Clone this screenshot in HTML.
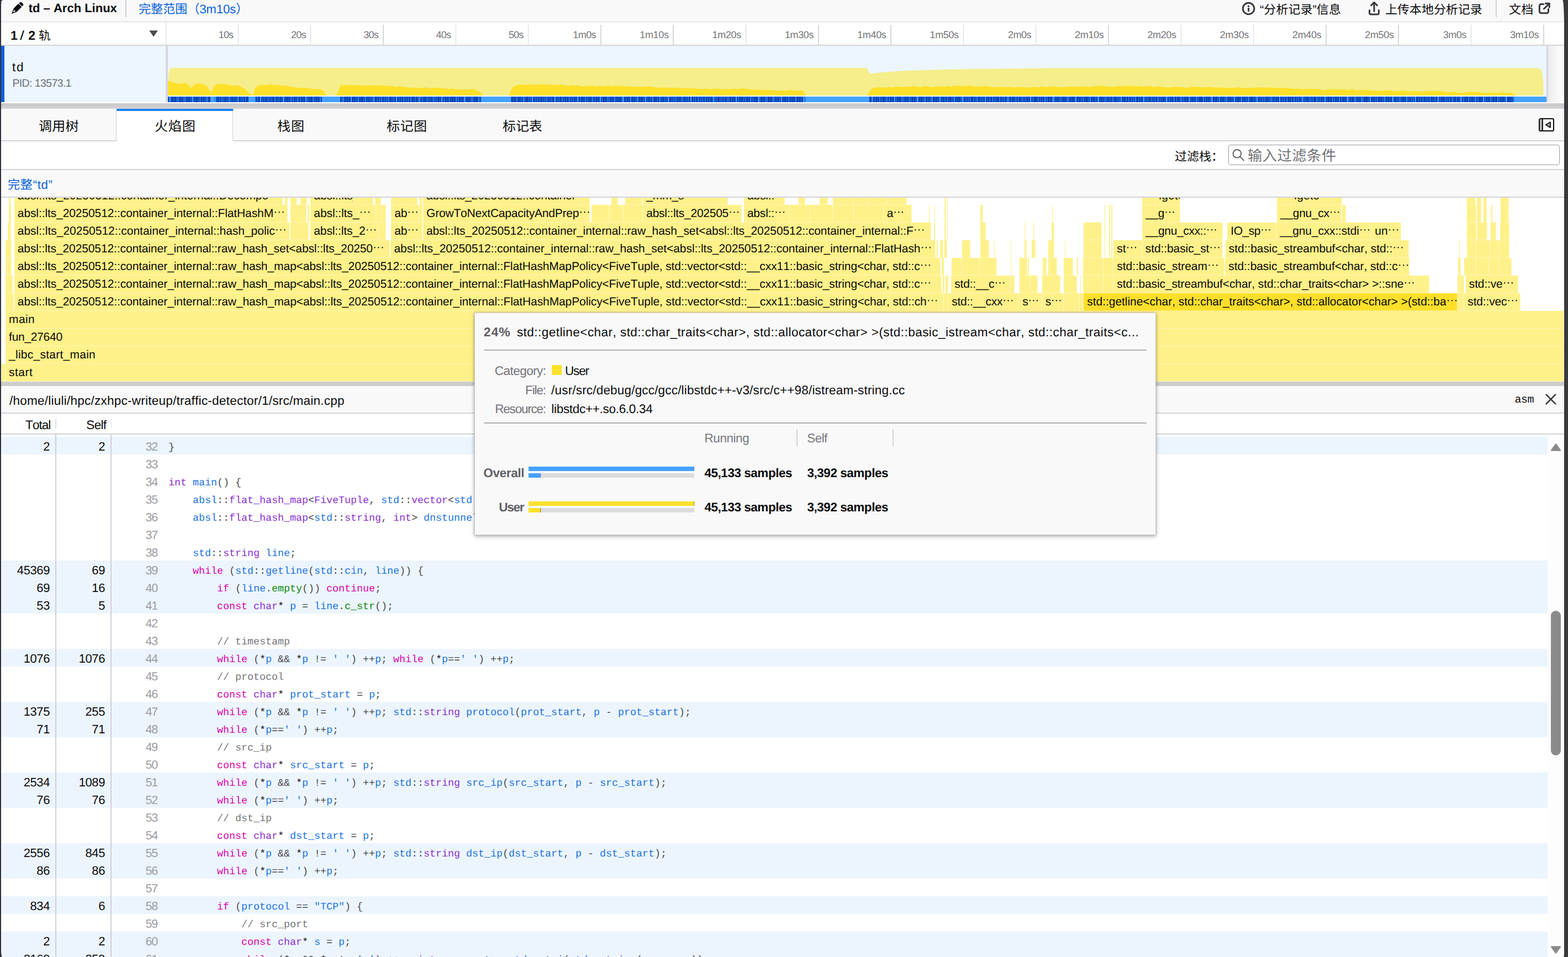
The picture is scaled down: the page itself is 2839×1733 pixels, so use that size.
<!DOCTYPE html>
<html lang="en"><head><meta charset="utf-8"><title>td – Arch Linux – Firefox Profiler</title>
<style>
html,body{margin:0;padding:0;background:#fff}
body{width:2839px;height:1733px;position:relative;overflow:hidden;font-family:"Liberation Sans",sans-serif;font-kerning:none;text-rendering:geometricPrecision}
.a{position:absolute;display:block}
.t{position:absolute;white-space:pre;font-family:"Liberation Sans",sans-serif}
.t.m{font-family:"Liberation Mono",monospace}
.ct{position:absolute;overflow:visible}
.ct svg{display:block;overflow:visible}
.ct svg text{font-family:"Liberation Sans","Noto Sans CJK SC",sans-serif}
.sr{position:absolute;left:0;top:0;width:1px;height:1px;overflow:hidden;opacity:0;font-size:1px;white-space:nowrap}
.fb{position:absolute;height:32px;box-sizing:border-box;background:#fff189;border-bottom:1px solid rgba(255,255,255,.42);border-right:1px solid rgba(255,255,255,.55);
 font-size:21px;line-height:28.4px;padding-top:2px;letter-spacing:-0.09px;padding-left:6.3px;color:#0c0c0d;white-space:pre;overflow:hidden}
.fe{position:absolute;height:32px;box-sizing:border-box;background:#fff189;border-bottom:1px solid rgba(255,255,255,.42);border-right:1px solid rgba(255,255,255,.55)}
.fb.sel{background:#fddf2a}
.fb i{font-style:normal;position:relative;top:-2.2px}
.code{position:absolute;left:305px;height:32px;line-height:32px;font-family:"Liberation Mono",monospace;font-size:18.333px;white-space:pre;color:#4a4a4f}
.kw{color:#dd00a9}.ty{color:#8a2fd0}.id{color:#1a72e0}.fn{color:#0a8a0a}.st{color:#1a72e0}.cm{color:#76767a}.op{color:#4a4a4f}.star{color:#0c0c0d}.nu{color:#058b00}
</style></head>
<body>
<div class="a" style="left:0.00px;top:0.00px;width:2839.00px;height:39.00px;background:#f9f9fa;"></div>
<div class="a" style="left:0.00px;top:38.60px;width:2839.00px;height:1.60px;background:#d4d4d8;"></div>
<svg class="a" style="left:19px;top:4px" width="23" height="23" viewBox="0 0 23 23"><g transform="rotate(45 11.5 11.5)" fill="#0c0c0d"><rect x="7.3" y="-2.6" width="8.4" height="4.6" rx="2"/><rect x="7.3" y="3.1" width="8.4" height="12.4"/><path d="M7.3 15.5 h8.4 l-4.2 9.6 z"/><path d="M9.5 17 h4 l-2 4.4 z" fill="#f9f9fa"/></g></svg>
<div class="t" style="left:51.72px;top:0.88px;font-size:22px;line-height:28px;color:#0c0c0d;font-weight:700;">td – Arch Linux</div>
<div class="a" style="left:227.00px;top:0.00px;width:1.60px;height:30.70px;background:#d0d0d5;"></div>
<div class="ct" style="left:249.21px;top:2.40px;width:202.2px;height:31.1px"><svg width="202.2" height="31.1" fill="#0a62d8"><text x="2" y="22.2" font-size="22.2" textLength="198.2" lengthAdjust="spacing">完整范围（3m10s）</text></svg></div>
<svg class="a" style="left:2247px;top:1.5px" width="27" height="27" viewBox="0 0 27 27"><circle cx="13.6" cy="13.5" r="10.3" fill="none" stroke="#38383d" stroke-width="3"/><circle cx="13.6" cy="9.2" r="1.75" fill="#38383d"/><rect x="12.1" y="12.1" width="3.1" height="7.2" rx="1.4" fill="#38383d"/></svg>
<div class="ct" style="left:2278.84px;top:2.60px;width:150.9px;height:30.8px"><svg width="150.9" height="30.8" fill="#0c0c0d"><text x="2" y="22" font-size="22" textLength="146.9" lengthAdjust="spacing">“分析记录”信息</text></svg></div>
<svg class="a" style="left:2476px;top:1px" width="24" height="28" viewBox="0 0 24 28" fill="none" stroke="#38383d" stroke-width="3" stroke-linecap="round" stroke-linejoin="round"><path d="M3.6 17.5 v5 a2.6 2.6 0 0 0 2.6 2.6 h11.6 a2.6 2.6 0 0 0 2.6 -2.6 v-5"/><path d="M12 19.5 V4"/><path d="M6.6 8.8 L12 3.4 L17.4 8.8"/></svg>
<div class="ct" style="left:2506.08px;top:2.60px;width:179.8px;height:30.8px"><svg width="179.8" height="30.8" fill="#0c0c0d"><text x="2" y="22" font-size="22" textLength="175.8" lengthAdjust="spacing">上传本地分析记录</text></svg></div>
<div class="a" style="left:2708.20px;top:0.00px;width:1.60px;height:30.50px;background:#d0d0d5;"></div>
<div class="ct" style="left:2730.00px;top:2.60px;width:48.3px;height:30.8px"><svg width="48.3" height="30.8" fill="#0c0c0d"><text x="2" y="22" font-size="22" textLength="44.3" lengthAdjust="spacing">文档</text></svg></div>
<svg class="a" style="left:2784px;top:3px" width="25" height="25" viewBox="0 0 25 25" fill="none" stroke="#38383d" stroke-width="3" stroke-linecap="round" stroke-linejoin="round"><path d="M10.5 4.6 H6.3 a3 3 0 0 0 -3 3 v10.2 a3 3 0 0 0 3 3 h10.2 a3 3 0 0 0 3 -3 V13.6"/><path d="M14.2 3.2 h7 v7"/><path d="M21 3.4 L11.4 13"/></svg>
<div class="a" style="left:0.00px;top:40.20px;width:2839.00px;height:41.30px;background:#ffffff;"></div>
<div class="a" style="left:0.00px;top:81.30px;width:2839.00px;height:1.70px;background:#d4d4d8;"></div>
<div class="t" style="left:18.98px;top:49.63px;font-size:23px;line-height:29px;color:#0c0c0d;font-weight:700;">1</div>
<div class="t" style="left:35.88px;top:49.63px;font-size:23px;line-height:29px;color:#0c0c0d;transform:scaleX(1.25);transform-origin:0 0;">/</div>
<div class="t" style="left:51.28px;top:49.63px;font-size:23px;line-height:29px;color:#0c0c0d;font-weight:700;">2</div>
<div class="ct" style="left:67.74px;top:49.50px;width:25.5px;height:30.1px"><svg width="25.5" height="30.1" fill="#0c0c0d"><text x="2" y="21.5" font-size="21.5">轨</text></svg></div>
<svg class="a" style="left:269px;top:54px" width="18" height="14" viewBox="0 0 18 14"><path d="M1.2 1.2 H16.8 L9 12.6 Z" fill="#4a4a4f"/></svg>
<div class="a" style="left:299.60px;top:40.20px;width:1.60px;height:42.00px;background:#d7d7db;"></div>
<div class="a" style="left:430.60px;top:45.00px;width:1.60px;height:36.50px;background:#d7d7db;"></div>
<div class="t" style="left:395.68px;top:51.86px;font-size:18px;line-height:22px;color:#75757a;letter-spacing:-0.796px;">10s</div>
<div class="a" style="left:561.90px;top:45.00px;width:1.60px;height:36.50px;background:#d7d7db;"></div>
<div class="t" style="left:526.98px;top:51.86px;font-size:18px;line-height:22px;color:#75757a;letter-spacing:-0.796px;">20s</div>
<div class="a" style="left:693.20px;top:45.00px;width:1.60px;height:36.50px;background:#d7d7db;"></div>
<div class="t" style="left:658.28px;top:51.86px;font-size:18px;line-height:22px;color:#75757a;letter-spacing:-0.796px;">30s</div>
<div class="a" style="left:824.50px;top:45.00px;width:1.60px;height:36.50px;background:#d7d7db;"></div>
<div class="t" style="left:789.58px;top:51.86px;font-size:18px;line-height:22px;color:#75757a;letter-spacing:-0.796px;">40s</div>
<div class="a" style="left:955.80px;top:45.00px;width:1.60px;height:36.50px;background:#d7d7db;"></div>
<div class="t" style="left:920.88px;top:51.86px;font-size:18px;line-height:22px;color:#75757a;letter-spacing:-0.796px;">50s</div>
<div class="a" style="left:1087.10px;top:45.00px;width:1.60px;height:36.50px;background:#d7d7db;"></div>
<div class="t" style="left:1037.18px;top:51.86px;font-size:18px;line-height:22px;color:#75757a;letter-spacing:-0.525px;">1m0s</div>
<div class="a" style="left:1218.40px;top:45.00px;width:1.60px;height:36.50px;background:#d7d7db;"></div>
<div class="t" style="left:1158.28px;top:51.86px;font-size:18px;line-height:22px;color:#75757a;letter-spacing:-0.348px;">1m10s</div>
<div class="a" style="left:1349.70px;top:45.00px;width:1.60px;height:36.50px;background:#d7d7db;"></div>
<div class="t" style="left:1289.58px;top:51.86px;font-size:18px;line-height:22px;color:#75757a;letter-spacing:-0.348px;">1m20s</div>
<div class="a" style="left:1481.00px;top:45.00px;width:1.60px;height:36.50px;background:#d7d7db;"></div>
<div class="t" style="left:1420.88px;top:51.86px;font-size:18px;line-height:22px;color:#75757a;letter-spacing:-0.348px;">1m30s</div>
<div class="a" style="left:1612.30px;top:45.00px;width:1.60px;height:36.50px;background:#d7d7db;"></div>
<div class="t" style="left:1552.18px;top:51.86px;font-size:18px;line-height:22px;color:#75757a;letter-spacing:-0.348px;">1m40s</div>
<div class="a" style="left:1743.60px;top:45.00px;width:1.60px;height:36.50px;background:#d7d7db;"></div>
<div class="t" style="left:1683.48px;top:51.86px;font-size:18px;line-height:22px;color:#75757a;letter-spacing:-0.348px;">1m50s</div>
<div class="a" style="left:1874.90px;top:45.00px;width:1.60px;height:36.50px;background:#d7d7db;"></div>
<div class="t" style="left:1824.98px;top:51.86px;font-size:18px;line-height:22px;color:#75757a;letter-spacing:-0.525px;">2m0s</div>
<div class="a" style="left:2006.20px;top:45.00px;width:1.60px;height:36.50px;background:#d7d7db;"></div>
<div class="t" style="left:1946.08px;top:51.86px;font-size:18px;line-height:22px;color:#75757a;letter-spacing:-0.348px;">2m10s</div>
<div class="a" style="left:2137.50px;top:45.00px;width:1.60px;height:36.50px;background:#d7d7db;"></div>
<div class="t" style="left:2077.38px;top:51.86px;font-size:18px;line-height:22px;color:#75757a;letter-spacing:-0.348px;">2m20s</div>
<div class="a" style="left:2268.80px;top:45.00px;width:1.60px;height:36.50px;background:#d7d7db;"></div>
<div class="t" style="left:2208.68px;top:51.86px;font-size:18px;line-height:22px;color:#75757a;letter-spacing:-0.348px;">2m30s</div>
<div class="a" style="left:2400.10px;top:45.00px;width:1.60px;height:36.50px;background:#d7d7db;"></div>
<div class="t" style="left:2339.98px;top:51.86px;font-size:18px;line-height:22px;color:#75757a;letter-spacing:-0.348px;">2m40s</div>
<div class="a" style="left:2531.40px;top:45.00px;width:1.60px;height:36.50px;background:#d7d7db;"></div>
<div class="t" style="left:2471.28px;top:51.86px;font-size:18px;line-height:22px;color:#75757a;letter-spacing:-0.348px;">2m50s</div>
<div class="a" style="left:2662.70px;top:45.00px;width:1.60px;height:36.50px;background:#d7d7db;"></div>
<div class="t" style="left:2612.78px;top:51.86px;font-size:18px;line-height:22px;color:#75757a;letter-spacing:-0.525px;">3m0s</div>
<div class="a" style="left:2794.00px;top:45.00px;width:1.60px;height:36.50px;background:#d7d7db;"></div>
<div class="t" style="left:2733.88px;top:51.86px;font-size:18px;line-height:22px;color:#75757a;letter-spacing:-0.348px;">3m10s</div>
<div class="a" style="left:0.00px;top:83.00px;width:2839.00px;height:102.20px;background:#edf6fe;"></div>
<div class="a" style="left:2.00px;top:83.00px;width:6.00px;height:102.20px;background:#0a5fe0;"></div>
<div class="t" style="left:22.00px;top:108.10px;font-size:22.5px;line-height:28px;color:#0c0c0d;letter-spacing:1.834px;">td</div>
<div class="t" style="left:22.42px;top:139.04px;font-size:19.5px;line-height:24px;color:#6c7079;letter-spacing:-0.608px;">PID: 13573.1</div>
<div class="a" style="left:300.20px;top:83.00px;width:3.60px;height:102.20px;background:#d8d6e0;"></div>
<svg class="a" style="left:304px;top:83px" width="2496" height="102.2"><polygon fill="#f5ee8a" points="0.0,89.8 0.0,64.0 1.5,48.0 4.0,41.5 8.0,39.8 1262.0,39.8 1266.0,41.0 1271.5,50.8 1293.0,48.0 1328.0,45.5 1396.0,43.0 1496.0,41.5 1596.0,40.6 1796.0,40.3 2482.0,40.3 2486.0,43.0 2489.0,54.0 2490.5,67.0 2490.5,89.8"/><polygon fill="#ffe02a" points="0.3,89.7 0.3,63.5 6.5,65.2 13.3,67.6 20.1,68.6 25.2,69.3 30.3,66.9 37.1,70.3 42.3,77.1 47.4,70.3 52.5,68.6 59.3,68.6 66.1,70.3 71.2,73.7 76.4,82.2 78.7,84.6 83.2,73.7 88.3,69.3 93.4,69.0 98.5,69.6 105.3,69.6 112.2,71.3 117.8,72.2 123.5,71.1 129.2,72.7 134.3,75.5 139.4,78.1 146.2,85.0 151.4,89.1 154.8,88.4 158.2,77.1 163.3,71.3 170.1,71.0 176.9,71.3 182.0,69.7 187.2,70.3 192.8,70.9 198.5,70.2 204.2,72.0 209.3,72.5 214.4,72.3 219.5,73.0 224.7,74.7 230.3,75.0 236.0,76.5 241.7,76.1 247.4,75.7 253.1,76.5 258.8,77.8 264.4,78.2 270.1,79.2 275.8,78.1 281.9,81.6 286.0,88.4 289.4,89.7 289.4,89.8 0.3,89.8"/><polygon fill="#ffe02a" points="304.8,89.7 308.2,82.2 313.3,71.0 320.1,70.7 326.9,71.3 332.6,70.5 338.3,71.9 344.0,70.6 349.7,71.9 355.4,71.5 361.0,72.0 366.7,71.0 372.4,72.3 378.1,71.1 383.8,72.3 389.5,71.5 395.1,72.7 400.8,72.0 406.5,73.2 412.2,74.6 417.9,73.1 423.5,73.7 429.2,74.7 434.9,75.3 440.6,76.4 446.3,75.6 452.0,75.4 457.6,77.1 463.3,76.1 469.0,75.1 474.7,77.4 480.4,76.1 486.1,75.9 491.7,76.0 497.4,77.1 503.1,76.9 508.8,78.5 514.5,77.1 520.2,78.5 525.8,78.9 531.5,78.8 537.0,78.7 542.4,79.4 547.9,78.3 553.3,78.5 558.8,79.9 565.6,83.9 570.7,89.1 572.4,89.7 572.4,89.8 304.8,89.8"/><polygon fill="#ffe02a" points="616.8,89.7 620.2,82.2 625.3,73.7 633.8,71.0 639.5,70.4 645.2,69.9 650.8,71.0 656.5,69.4 662.2,70.5 667.9,70.3 673.6,70.1 679.3,69.4 684.9,70.7 690.6,69.6 696.3,70.7 702.0,71.0 707.7,70.0 713.4,70.3 719.0,71.3 724.7,72.5 730.4,70.9 736.1,72.0 741.8,71.4 747.5,72.6 753.1,73.5 758.8,72.7 764.5,72.3 770.2,72.7 775.9,74.0 781.5,71.7 787.2,74.0 792.9,72.6 798.6,72.3 804.3,73.4 810.2,72.0 816.2,72.7 816.0,72.7 821.7,72.4 827.4,73.9 833.0,72.4 838.7,73.6 844.4,73.9 850.1,73.7 855.8,73.7 861.5,74.4 867.1,73.4 872.8,73.7 878.5,74.4 884.2,75.4 889.9,76.0 895.6,75.5 901.2,75.3 906.9,76.1 912.6,75.9 918.3,76.1 924.0,75.7 929.6,77.2 935.3,77.1 941.0,76.1 946.7,77.1 952.4,77.1 958.1,77.4 963.7,78.4 969.4,78.2 975.1,77.3 980.8,79.2 986.5,78.1 992.2,77.3 997.8,78.2 1003.5,79.2 1009.2,77.7 1014.9,78.7 1020.6,78.8 1025.7,77.2 1030.8,78.4 1035.9,78.2 1041.0,77.1 1047.8,78.2 1054.7,78.8 1060.3,80.0 1066.0,78.7 1071.7,79.8 1077.4,79.8 1083.1,79.9 1088.8,79.9 1094.4,79.9 1100.1,81.1 1105.8,81.5 1111.5,80.5 1117.2,81.1 1122.9,80.9 1128.0,79.6 1133.1,81.1 1138.2,80.8 1143.3,81.6 1148.4,80.2 1151.8,83.9 1155.2,89.1 1156.9,89.7 1156.9,89.8 616.8,89.8"/><polygon fill="#ffe02a" points="1266.1,89.7 1269.5,83.9 1274.6,77.1 1280.8,76.1 1287.1,75.1 1293.3,75.4 1299.0,75.7 1304.7,74.1 1310.4,75.2 1316.1,74.6 1321.7,73.7 1327.4,74.7 1332.7,74.7 1337.9,73.4 1343.2,74.3 1348.4,73.3 1353.6,73.3 1358.9,74.1 1364.1,75.0 1369.4,73.1 1374.6,73.3 1379.9,74.3 1385.1,75.0 1390.4,74.0 1395.6,73.7 1400.7,73.3 1405.8,74.7 1411.0,72.2 1416.1,74.2 1421.2,72.7 1426.3,72.2 1431.4,72.0 1436.5,72.4 1441.6,73.6 1446.8,72.7 1451.9,72.1 1457.0,73.3 1462.1,73.7 1467.2,73.2 1472.3,73.8 1477.4,72.8 1482.6,73.0 1487.7,73.6 1492.8,75.0 1497.9,74.7 1503.1,74.5 1508.4,74.3 1513.6,75.0 1518.9,74.6 1524.1,74.2 1529.4,75.5 1534.6,75.3 1539.9,74.1 1545.1,74.9 1550.3,74.8 1555.6,75.7 1560.8,75.3 1566.1,74.7 1571.1,74.1 1576.1,75.9 1581.1,73.6 1586.1,74.3 1591.1,75.1 1596.1,73.5 1601.1,74.3 1606.1,73.1 1611.1,74.7 1616.1,74.9 1621.1,74.3 1626.1,75.0 1631.1,73.5 1636.1,74.4 1641.1,74.1 1646.1,74.0 1651.1,73.7 1656.1,73.7 1660.4,73.5 1665.8,74.2 1671.3,74.3 1676.7,72.9 1682.1,72.8 1687.2,73.2 1692.4,71.7 1697.5,73.4 1702.7,73.4 1707.8,74.3 1713.0,73.9 1718.2,72.6 1723.3,72.9 1728.5,73.7 1733.6,72.0 1738.8,73.2 1743.9,72.5 1749.1,72.4 1754.2,73.5 1759.4,72.4 1764.5,74.3 1769.7,72.8 1774.9,73.1 1780.0,73.6 1785.2,74.9 1790.3,72.9 1795.5,74.0 1800.6,74.3 1805.8,75.3 1810.9,75.2 1816.1,75.4 1821.2,73.9 1826.4,74.6 1831.5,74.4 1836.7,74.4 1841.9,75.8 1847.0,76.1 1852.2,74.0 1857.3,74.2 1862.5,74.4 1867.6,74.5 1872.8,75.2 1877.9,75.6 1883.1,74.8 1888.2,74.2 1893.4,75.4 1898.6,75.7 1903.7,75.3 1908.9,75.8 1914.0,76.8 1919.2,76.1 1924.3,75.7 1929.5,76.0 1934.6,76.1 1939.8,74.5 1944.9,76.7 1950.1,76.4 1955.2,76.6 1960.4,76.4 1965.6,75.4 1970.7,75.7 1975.9,75.6 1981.0,75.0 1986.2,76.5 1991.3,75.2 1996.5,75.4 2001.6,76.0 2006.8,76.0 2011.9,76.7 2017.1,76.1 2022.3,76.2 2027.4,76.7 2032.6,76.8 2037.7,77.6 2042.9,78.2 2048.0,77.0 2053.2,79.3 2058.3,78.7 2063.5,77.6 2068.6,77.9 2073.8,78.2 2078.9,78.4 2084.1,77.8 2089.3,79.8 2094.4,80.2 2099.6,78.9 2104.7,79.1 2109.9,78.1 2115.0,79.3 2120.2,78.3 2125.3,79.1 2130.5,79.0 2135.6,80.5 2140.8,78.9 2146.0,78.6 2151.1,81.2 2156.3,80.2 2161.4,79.3 2166.6,80.4 2171.7,79.2 2176.9,80.6 2182.0,81.8 2187.2,80.7 2192.3,81.7 2197.5,81.4 2202.6,80.3 2207.8,80.7 2213.0,80.2 2218.1,81.9 2223.3,81.3 2228.4,82.0 2233.6,81.0 2238.7,80.8 2243.9,82.4 2249.0,82.9 2254.2,82.6 2259.3,81.8 2264.5,82.7 2269.7,82.9 2274.8,82.8 2280.0,81.6 2285.1,82.5 2290.3,82.2 2295.4,81.5 2300.6,81.6 2305.7,82.4 2310.9,82.4 2316.0,83.7 2321.2,84.5 2326.3,83.3 2331.5,83.6 2336.7,84.8 2341.8,85.0 2347.0,85.0 2352.1,83.5 2357.3,83.2 2362.4,83.3 2367.6,83.3 2372.7,83.4 2377.9,84.6 2383.0,85.4 2388.2,85.3 2393.3,84.5 2398.5,85.0 2403.7,84.7 2409.4,85.5 2415.2,83.6 2421.0,85.1 2426.7,85.7 2432.5,84.7 2439.7,89.0 2443.3,90.1 2443.3,89.8 1266.1,89.8"/></svg>
<div class="a" style="left:304.00px;top:172.80px;width:2496.00px;height:2.20px;background:#eaf8ff;"></div>
<div class="a" style="left:304.00px;top:175.00px;width:2438.00px;height:10.20px;background:repeating-linear-gradient(90deg,rgba(69,161,255,0) 0 3px,rgba(69,161,255,.9) 3px 4.5px,rgba(69,161,255,0) 4.5px 17px,rgba(69,161,255,.7) 17px 18px,rgba(69,161,255,0) 18px 29px,rgba(69,161,255,.5) 29px 30.5px,rgba(69,161,255,0) 30.5px 41px),repeating-linear-gradient(90deg,rgba(0,30,120,0) 0 6px,rgba(0,30,120,.35) 6px 8px,rgba(0,30,120,0) 8px 13px,rgba(0,30,120,.3) 13px 14px,rgba(0,30,120,0) 14px 23px),repeating-linear-gradient(90deg,#0b48b8 0 2px,#1f6fe0 2px 3px,#0c4fc4 3px 6px,#2f7fe8 6px 7px,#0a44b2 7px 10px,#1862d6 10px 11px,#0b49bb 11px 13px),#0a45b5;"></div>
<div class="a" style="left:2742.00px;top:175.00px;width:58.00px;height:10.20px;background:#45a1ff;"></div>
<div class="a" style="left:380.50px;top:175.00px;width:7.00px;height:10.20px;background:#45a1ff;"></div>
<div class="a" style="left:450.00px;top:175.00px;width:12.00px;height:10.20px;background:#45a1ff;"></div>
<div class="a" style="left:582.50px;top:175.00px;width:33.50px;height:10.20px;background:#45a1ff;"></div>
<div class="a" style="left:871.00px;top:175.00px;width:53.50px;height:10.20px;background:#45a1ff;"></div>
<div class="a" style="left:1457.50px;top:175.00px;width:116.00px;height:10.20px;background:#45a1ff;"></div>
<div class="a" style="left:2800.00px;top:83.00px;width:3.20px;height:102.20px;background:#d8d6e0;"></div>
<div class="a" style="left:2803.20px;top:83.00px;width:29.00px;height:102.20px;background:linear-gradient(90deg,#ececee,#fafafa 70%);"></div>
<div class="a" style="left:0.00px;top:185.20px;width:2839.00px;height:1.80px;background:#ffffff;"></div>
<div class="a" style="left:0.00px;top:187.00px;width:2839.00px;height:10.00px;background:linear-gradient(180deg,#c9c9cc 0,#cdcdcf 60%,#d6d6d8 100%);"></div>
<div class="a" style="left:0.00px;top:197.00px;width:2839.00px;height:58.00px;background:#f9f9fa;"></div>
<div class="a" style="left:0.00px;top:254.20px;width:2839.00px;height:1.90px;background:#d6d6d8;"></div>
<div class="a" style="left:210.50px;top:197.00px;width:211.00px;height:59.20px;background:#ffffff;"></div>
<div class="a" style="left:210.50px;top:197.00px;width:211.00px;height:3.80px;background:#1a82f0;"></div>
<div class="a" style="left:209.80px;top:200.80px;width:1.50px;height:54.00px;background:#d4d4d8;"></div>
<div class="a" style="left:420.80px;top:200.80px;width:1.50px;height:54.00px;background:#d4d4d8;"></div>
<div class="ct" style="left:67.76px;top:212.60px;width:76.4px;height:33.6px"><svg width="76.4" height="33.6" fill="#0c0c0d"><text x="2" y="24" font-size="24" textLength="72.4" lengthAdjust="spacing">调用树</text></svg></div>
<div class="ct" style="left:277.55px;top:212.60px;width:77.7px;height:33.6px"><svg width="77.7" height="33.6" fill="#0c0c0d"><text x="2" y="24" font-size="24" textLength="73.7" lengthAdjust="spacing">火焰图</text></svg></div>
<div class="ct" style="left:500.07px;top:212.60px;width:53.1px;height:33.6px"><svg width="53.1" height="33.6" fill="#0c0c0d"><text x="2" y="24" font-size="24" textLength="49.1" lengthAdjust="spacing">栈图</text></svg></div>
<div class="ct" style="left:698.22px;top:212.60px;width:77.0px;height:33.6px"><svg width="77.0" height="33.6" fill="#0c0c0d"><text x="2" y="24" font-size="24" textLength="73" lengthAdjust="spacing">标记图</text></svg></div>
<div class="ct" style="left:908.23px;top:212.60px;width:75.8px;height:33.6px"><svg width="75.8" height="33.6" fill="#0c0c0d"><text x="2" y="24" font-size="24" textLength="71.8" lengthAdjust="spacing">标记表</text></svg></div>
<svg class="a" style="left:2784px;top:212px" width="32" height="28" viewBox="0 0 32 28"><rect x="3.05" y="3.05" width="25.9" height="22" rx="2" fill="#fff" stroke="#0c0c0d" stroke-width="2.1"/><rect x="4.1" y="4.1" width="3.8" height="19.9" fill="#b4b4b6"/><path d="M8.8 3 V25" stroke="#0c0c0d" stroke-width="2.1"/><path d="M22.9 9.2 V18.9 L14.8 14.05 Z" fill="#b4b4b6" stroke="#0c0c0d" stroke-width="1.9" stroke-linejoin="round"/></svg>
<div class="a" style="left:0.00px;top:256.20px;width:2839.00px;height:50.00px;background:#ffffff;"></div>
<div class="a" style="left:0.00px;top:306.00px;width:2839.00px;height:1.60px;background:#d4d4d8;"></div>
<div class="ct" style="left:2125.49px;top:269.30px;width:92.0px;height:30.8px"><svg width="92.0" height="30.8" fill="#0c0c0d"><text x="2" y="22" font-size="22" textLength="88" lengthAdjust="spacing">过滤栈：</text></svg></div>
<div class="a" style="left:2224.00px;top:262.00px;width:599.50px;height:37.40px;background:#ffffff;border:1.4px solid #9a9aa0;border-radius:4px;box-sizing:border-box;"></div>
<svg class="a" style="left:2230px;top:268px" width="26" height="26" viewBox="0 0 26 26" fill="none" stroke="#58585c" stroke-width="1.9" stroke-linecap="round"><circle cx="9.9" cy="10.3" r="7.3"/><path d="M15.4 15.8 L21.8 22.3"/></svg>
<div class="ct" style="left:2256.68px;top:264.70px;width:164.2px;height:36.8px"><svg width="164.2" height="36.8" fill="#737378"><text x="2" y="26.3" font-size="26.3" textLength="160.2" lengthAdjust="spacing">输入过滤条件</text></svg></div>
<div class="a" style="left:0.00px;top:307.60px;width:2839.00px;height:49.00px;background:#f9f9fa;"></div>
<div class="a" style="left:0.00px;top:356.00px;width:2839.00px;height:1.60px;background:#d4d4d8;"></div>
<div class="ct" style="left:12.26px;top:319.80px;width:85.0px;height:31.1px"><svg width="85.0" height="31.1" fill="#0a62d8"><text x="2" y="22.2" font-size="22.2" textLength="81" lengthAdjust="spacing">完整“td”</text></svg></div>
<div class="a" style="left:0;top:357.6px;width:2832px;height:333.0px;overflow:hidden;background:#fff"><div class="fe" style="left:2.6px;top:301.0px;width:7.2px;"></div><div class="fb" style="left:9.8px;top:301.0px;width:2822.2px;letter-spacing:0.451px;">start</div><div class="fb" style="left:9.8px;top:269.0px;width:2822.2px;letter-spacing:0.249px;">_libc_start_main</div><div class="fb" style="left:9.8px;top:237.0px;width:2822.2px;letter-spacing:-0.287px;">fun_27640</div><div class="fb" style="left:9.8px;top:205.0px;width:2822.2px;letter-spacing:0.387px;">main</div><div class="fe" style="left:9.8px;top:173.0px;width:15.4px;"></div><div class="fb" style="left:25.5px;top:173.0px;width:1683.5px;letter-spacing:-0.101px;">absl::lts_20250512::container_internal::raw_hash_map&lt;absl::lts_20250512::container_internal::FlatHashMapPolicy&lt;FiveTuple, std::vector&lt;std::__cxx11::basic_string&lt;char, std::ch<i>···</i></div><div class="fe" style="left:1709.0px;top:173.0px;width:3.5px;border-right:0;"></div><div class="fe" style="left:1712.5px;top:173.0px;width:4.5px;"></div><div class="fb" style="left:1717.0px;top:173.0px;width:128.0px;letter-spacing:-0.263px;">std::__cxx<i>···</i></div><div class="fb" style="left:1845.0px;top:173.0px;width:41.5px;letter-spacing:-0.547px;">s<i>···</i></div><div class="fb" style="left:1886.5px;top:173.0px;width:39.0px;letter-spacing:-0.547px;">s<i>···</i></div><div class="fe" style="left:1925.5px;top:173.0px;width:29.5px;"></div><div class="fe" style="left:1955.0px;top:173.0px;width:7.0px;"></div><div class="fb sel" style="left:1962.0px;top:173.0px;width:677.0px;letter-spacing:-0.046px;">std::getline&lt;char, std::char_traits&lt;char&gt;, std::allocator&lt;char&gt; &gt;(std::ba<i>···</i></div><div class="fe" style="left:2639.0px;top:173.0px;width:12.0px;"></div><div class="fb" style="left:2651.0px;top:173.0px;width:101.5px;letter-spacing:-0.167px;">std::vec<i>···</i></div><div class="fe" style="left:9.8px;top:141.0px;width:13.0px;"></div><div class="fb" style="left:25.5px;top:141.0px;width:1679.5px;letter-spacing:-0.104px;">absl::lts_20250512::container_internal::raw_hash_map&lt;absl::lts_20250512::container_internal::FlatHashMapPolicy&lt;FiveTuple, std::vector&lt;std::__cxx11::basic_string&lt;char, std::c<i>···</i></div><div class="fe" style="left:1707.0px;top:141.0px;width:3.0px;border-right:0;"></div><div class="fe" style="left:1712.0px;top:141.0px;width:4.5px;"></div><div class="fb" style="left:1722.0px;top:141.0px;width:107.0px;letter-spacing:-0.197px;">std::__c<i>···</i></div><div class="fe" style="left:1829.0px;top:141.0px;width:8.0px;"></div><div class="fe" style="left:1846.0px;top:141.0px;width:19.0px;"></div><div class="fe" style="left:1865.0px;top:141.0px;width:14.0px;"></div><div class="fe" style="left:1887.0px;top:141.0px;width:33.0px;"></div><div class="fe" style="left:1926.0px;top:141.0px;width:24.0px;"></div><div class="fe" style="left:1955.5px;top:141.0px;width:1.5px;border-right:0;"></div><div class="fe" style="left:1960.5px;top:141.0px;width:37.0px;"></div><div class="fe" style="left:1997.5px;top:141.0px;width:18.0px;"></div><div class="fb" style="left:2016.0px;top:141.0px;width:544.5px;letter-spacing:-0.112px;">std::basic_streambuf&lt;char, std::char_traits&lt;char&gt; &gt;::sne<i>···</i></div><div class="fe" style="left:2560.5px;top:141.0px;width:27.0px;"></div><div class="fe" style="left:2639.0px;top:141.0px;width:5.0px;"></div><div class="fe" style="left:2644.0px;top:141.0px;width:7.0px;"></div><div class="fb" style="left:2653.5px;top:141.0px;width:95.5px;letter-spacing:-0.145px;">std::ve<i>···</i></div><div class="fe" style="left:9.8px;top:109.0px;width:4.2px;"></div><div class="fe" style="left:14.0px;top:109.0px;width:7.0px;"></div><div class="fb" style="left:25.5px;top:109.0px;width:1677.0px;letter-spacing:-0.104px;">absl::lts_20250512::container_internal::raw_hash_map&lt;absl::lts_20250512::container_internal::FlatHashMapPolicy&lt;FiveTuple, std::vector&lt;std::__cxx11::basic_string&lt;char, std::c<i>···</i></div><div class="fe" style="left:1705.0px;top:109.0px;width:3.5px;border-right:0;"></div><div class="fe" style="left:1722.5px;top:109.0px;width:18.5px;"></div><div class="fe" style="left:1741.0px;top:109.0px;width:33.0px;"></div><div class="fe" style="left:1774.0px;top:109.0px;width:31.0px;"></div><div class="fe" style="left:1829.5px;top:109.0px;width:1.5px;border-right:0;"></div><div class="fe" style="left:1846.0px;top:109.0px;width:14.0px;"></div><div class="fe" style="left:1861.0px;top:109.0px;width:1.5px;border-right:0;"></div><div class="fe" style="left:1887.5px;top:109.0px;width:7.5px;"></div><div class="fe" style="left:1897.5px;top:109.0px;width:16.0px;"></div><div class="fe" style="left:1926.0px;top:109.0px;width:16.5px;"></div><div class="fe" style="left:1950.0px;top:109.0px;width:1.5px;border-right:0;"></div><div class="fe" style="left:1960.5px;top:109.0px;width:37.0px;"></div><div class="fe" style="left:1997.5px;top:109.0px;width:18.0px;"></div><div class="fb" style="left:2016.0px;top:109.0px;width:201.0px;letter-spacing:-0.057px;">std::basic_stream<i>···</i></div><div class="fb" style="left:2218.0px;top:109.0px;width:334.0px;letter-spacing:-0.068px;">std::basic_streambuf&lt;char, std::c<i>···</i></div><div class="fe" style="left:2640.0px;top:109.0px;width:5.0px;"></div><div class="fe" style="left:2650.5px;top:109.0px;width:22.5px;"></div><div class="fe" style="left:2673.0px;top:109.0px;width:22.5px;"></div><div class="fe" style="left:2695.5px;top:109.0px;width:18.5px;"></div><div class="fe" style="left:2714.0px;top:109.0px;width:23.0px;"></div><div class="fe" style="left:10.4px;top:77.0px;width:3.6px;border-right:0;"></div><div class="fe" style="left:14.0px;top:77.0px;width:6.6px;"></div><div class="fb" style="left:25.5px;top:77.0px;width:680.9px;letter-spacing:-0.114px;">absl::lts_20250512::container_internal::raw_hash_set&lt;absl::lts_20250<i>···</i></div><div class="fb" style="left:707.2px;top:77.0px;width:987.0px;letter-spacing:-0.072px;">absl::lts_20250512::container_internal::raw_hash_set&lt;absl::lts_20250512::container_internal::FlatHash<i>···</i></div><div class="fe" style="left:1696.0px;top:77.0px;width:2.0px;border-right:0;"></div><div class="fe" style="left:1702.0px;top:77.0px;width:6.0px;"></div><div class="fe" style="left:1710.0px;top:77.0px;width:5.0px;"></div><div class="fe" style="left:1742.0px;top:77.0px;width:15.0px;"></div><div class="fe" style="left:1774.5px;top:77.0px;width:16.5px;"></div><div class="fe" style="left:1799.5px;top:77.0px;width:1.5px;border-right:0;"></div><div class="fe" style="left:1829.5px;top:77.0px;width:1.5px;border-right:0;"></div><div class="fe" style="left:1854.5px;top:77.0px;width:4.5px;"></div><div class="fe" style="left:1868.0px;top:77.0px;width:7.0px;"></div><div class="fe" style="left:1897.5px;top:77.0px;width:11.5px;"></div><div class="fe" style="left:1927.5px;top:77.0px;width:1.5px;border-right:0;"></div><div class="fe" style="left:1962.0px;top:77.0px;width:33.0px;"></div><div class="fe" style="left:1999.5px;top:77.0px;width:1.5px;border-right:0;"></div><div class="fe" style="left:2008.0px;top:77.0px;width:1.5px;border-right:0;"></div><div class="fe" style="left:2012.0px;top:77.0px;width:1.5px;border-right:0;"></div><div class="fb" style="left:2016.0px;top:77.0px;width:51.5px;letter-spacing:-0.113px;">st<i>···</i></div><div class="fb" style="left:2067.5px;top:77.0px;width:146.0px;letter-spacing:-0.094px;">std::basic_st<i>···</i></div><div class="fb" style="left:2218.5px;top:77.0px;width:332.5px;letter-spacing:-0.058px;">std::basic_streambuf&lt;char, std::<i>···</i></div><div class="fe" style="left:2641.5px;top:77.0px;width:1.5px;border-right:0;"></div><div class="fe" style="left:2655.5px;top:77.0px;width:17.5px;"></div><div class="fe" style="left:2673.0px;top:77.0px;width:25.0px;"></div><div class="fe" style="left:2698.0px;top:77.0px;width:16.0px;"></div><div class="fe" style="left:2714.0px;top:77.0px;width:19.0px;"></div><div class="fe" style="left:14.4px;top:45.0px;width:5.4px;"></div><div class="fb" style="left:25.5px;top:45.0px;width:499.7px;letter-spacing:-0.022px;">absl::lts_20250512::container_internal::hash_polic<i>···</i></div><div class="fe" style="left:526.0px;top:45.0px;width:32.5px;"></div><div class="fb" style="left:562.0px;top:45.0px;width:123.6px;letter-spacing:-0.121px;">absl::lts_2<i>···</i></div><div class="fe" style="left:685.6px;top:45.0px;width:13.0px;"></div><div class="fb" style="left:708.0px;top:45.0px;width:56.8px;letter-spacing:-0.184px;">ab<i>···</i></div><div class="fb" style="left:765.6px;top:45.0px;width:920.4px;letter-spacing:-0.077px;">absl::lts_20250512::container_internal::raw_hash_set&lt;absl::lts_20250512::container_internal::F<i>···</i></div><div class="fe" style="left:1691.0px;top:45.0px;width:1.5px;border-right:0;"></div><div class="fe" style="left:1714.5px;top:45.0px;width:1.5px;border-right:0;"></div><div class="fe" style="left:1710.0px;top:45.0px;width:1.5px;border-right:0;"></div><div class="fe" style="left:1774.5px;top:45.0px;width:10.5px;"></div><div class="fe" style="left:1854.5px;top:45.0px;width:1.5px;border-right:0;"></div><div class="fe" style="left:1870.5px;top:45.0px;width:1.5px;border-right:0;"></div><div class="fe" style="left:1903.5px;top:45.0px;width:5.5px;"></div><div class="fe" style="left:1962.0px;top:45.0px;width:33.0px;"></div><div class="fe" style="left:1999.5px;top:45.0px;width:1.5px;border-right:0;"></div><div class="fe" style="left:2008.0px;top:45.0px;width:1.5px;border-right:0;"></div><div class="fe" style="left:2012.0px;top:45.0px;width:1.5px;border-right:0;"></div><div class="fb" style="left:2068.0px;top:45.0px;width:145.5px;letter-spacing:-0.340px;">__gnu_cxx::<i>···</i></div><div class="fb" style="left:2222.0px;top:45.0px;width:89.0px;letter-spacing:-0.479px;">IO_sp<i>···</i></div><div class="fb" style="left:2311.0px;top:45.0px;width:172.0px;letter-spacing:-0.163px;">__gnu_cxx::stdi<i>···</i></div><div class="fb" style="left:2483.0px;top:45.0px;width:54.0px;letter-spacing:-0.041px;">un<i>···</i></div><div class="fe" style="left:2655.5px;top:45.0px;width:17.5px;"></div><div class="fe" style="left:2674.0px;top:45.0px;width:19.0px;"></div><div class="fe" style="left:2699.0px;top:45.0px;width:10.0px;"></div><div class="fe" style="left:2715.5px;top:45.0px;width:17.5px;"></div><div class="fe" style="left:16.3px;top:13.0px;width:3.5px;border-right:0;"></div><div class="fb" style="left:25.5px;top:13.0px;width:495.1px;letter-spacing:-0.099px;">absl::lts_20250512::container_internal::FlatHashM<i>···</i></div><div class="fe" style="left:525.7px;top:13.0px;width:29.8px;"></div><div class="fe" style="left:557.0px;top:13.0px;width:2.5px;border-right:0;"></div><div class="fb" style="left:562.0px;top:13.0px;width:119.2px;letter-spacing:-0.079px;">absl::lts_<i>···</i></div><div class="fe" style="left:681.2px;top:13.0px;width:8.8px;"></div><div class="fe" style="left:690.0px;top:13.0px;width:8.6px;"></div><div class="fb" style="left:708.0px;top:13.0px;width:50.8px;letter-spacing:-0.184px;">ab<i>···</i></div><div class="fe" style="left:758.8px;top:13.0px;width:5.8px;"></div><div class="fb" style="left:765.8px;top:13.0px;width:302.4px;letter-spacing:-0.207px;">GrowToNextCapacityAndPrep<i>···</i></div><div class="fe" style="left:1070.6px;top:13.0px;width:32.4px;"></div><div class="fe" style="left:1103.0px;top:13.0px;width:26.0px;"></div><div class="fe" style="left:1129.0px;top:13.0px;width:35.0px;"></div><div class="fb" style="left:1164.0px;top:13.0px;width:179.0px;letter-spacing:-0.267px;">absl::lts_202505<i>···</i></div><div class="fb" style="left:1346.6px;top:13.0px;width:83.4px;letter-spacing:-0.203px;">absl::<i>···</i></div><div class="fe" style="left:1430.0px;top:13.0px;width:36.5px;"></div><div class="fe" style="left:1466.5px;top:13.0px;width:41.0px;"></div><div class="fe" style="left:1507.5px;top:13.0px;width:38.0px;"></div><div class="fe" style="left:1545.5px;top:13.0px;width:54.0px;"></div><div class="fb" style="left:1599.5px;top:13.0px;width:51.5px;letter-spacing:-0.376px;">a<i>···</i></div><div class="fe" style="left:1681.5px;top:13.0px;width:1.5px;border-right:0;"></div><div class="fe" style="left:1691.5px;top:13.0px;width:1.5px;border-right:0;"></div><div class="fe" style="left:1714.5px;top:13.0px;width:1.5px;border-right:0;"></div><div class="fe" style="left:1710.0px;top:13.0px;width:1.5px;border-right:0;"></div><div class="fe" style="left:1774.5px;top:13.0px;width:5.0px;"></div><div class="fe" style="left:1904.5px;top:13.0px;width:1.5px;border-right:0;"></div><div class="fe" style="left:1999.5px;top:13.0px;width:1.5px;border-right:0;"></div><div class="fe" style="left:2008.0px;top:13.0px;width:1.5px;border-right:0;"></div><div class="fe" style="left:2012.0px;top:13.0px;width:1.5px;border-right:0;"></div><div class="fb" style="left:2068.0px;top:13.0px;width:69.0px;letter-spacing:-0.446px;">__g<i>···</i></div><div class="fb" style="left:2311.8px;top:13.0px;width:117.7px;letter-spacing:-0.318px;">__gnu_cx<i>···</i></div><div class="fe" style="left:2429.5px;top:13.0px;width:7.3px;"></div><div class="fe" style="left:2655.5px;top:13.0px;width:17.5px;"></div><div class="fe" style="left:2674.0px;top:13.0px;width:7.5px;"></div><div class="fe" style="left:2685.5px;top:13.0px;width:6.0px;"></div><div class="fe" style="left:2700.0px;top:13.0px;width:1.5px;border-right:0;"></div><div class="fe" style="left:2716.8px;top:13.0px;width:15.0px;"></div><div class="fe" style="left:16.3px;top:-19.0px;width:2.5px;border-right:0;"></div><div class="fb" style="left:25.5px;top:-19.0px;width:486.5px;letter-spacing:-0.046px;">absl::lts_20250512::container_internal::Decompo<i>···</i></div><div class="fe" style="left:516.0px;top:-19.0px;width:5.0px;"></div><div class="fe" style="left:525.7px;top:-19.0px;width:12.3px;"></div><div class="fe" style="left:544.0px;top:-19.0px;width:12.0px;"></div><div class="fb" style="left:562.0px;top:-19.0px;width:78.0px;letter-spacing:-0.079px;">absl::lts_<i>···</i></div><div class="fe" style="left:640.0px;top:-19.0px;width:36.0px;"></div><div class="fe" style="left:679.0px;top:-19.0px;width:11.0px;"></div><div class="fe" style="left:708.0px;top:-19.0px;width:48.0px;"></div><div class="fe" style="left:760.0px;top:-19.0px;width:4.5px;"></div><div class="fb" style="left:765.8px;top:-19.0px;width:302.7px;letter-spacing:-0.136px;">absl::lts_20250512::container<i>···</i></div><div class="fe" style="left:1107.0px;top:-19.0px;width:12.0px;"></div><div class="fe" style="left:1132.0px;top:-19.0px;width:31.0px;"></div><div class="fb" style="left:1164.0px;top:-19.0px;width:153.6px;letter-spacing:-0.206px;">_mm_s<i>···</i></div><div class="fb" style="left:1346.8px;top:-19.0px;width:74.7px;letter-spacing:-0.203px;">absl::<i>···</i></div><div class="fe" style="left:1446.0px;top:-19.0px;width:12.0px;"></div><div class="fe" style="left:1484.0px;top:-19.0px;width:15.0px;"></div><div class="fe" style="left:1507.5px;top:-19.0px;width:38.0px;"></div><div class="fe" style="left:1545.5px;top:-19.0px;width:27.5px;"></div><div class="fe" style="left:1573.0px;top:-19.0px;width:33.0px;"></div><div class="fe" style="left:1606.0px;top:-19.0px;width:35.5px;"></div><div class="fe" style="left:1710.0px;top:-19.0px;width:1.5px;border-right:0;"></div><div class="fe" style="left:1714.5px;top:-19.0px;width:1.5px;border-right:0;"></div><div class="fe" style="left:2068.0px;top:-19.0px;width:24.0px;"></div><div class="fb" style="left:2092.0px;top:-19.0px;width:45.0px;letter-spacing:0.172px;">igetc</div><div class="fe" style="left:2311.8px;top:-19.0px;width:25.2px;"></div><div class="fb" style="left:2337.0px;top:-19.0px;width:93.0px;letter-spacing:0.172px;">igetc</div><div class="fe" style="left:2655.5px;top:-19.0px;width:16.5px;"></div><div class="fe" style="left:2674.0px;top:-19.0px;width:7.5px;"></div><div class="fe" style="left:2685.5px;top:-19.0px;width:6.0px;"></div><div class="fe" style="left:2716.8px;top:-19.0px;width:15.0px;"></div></div>
<div class="a" style="left:0.00px;top:690.60px;width:2839.00px;height:8.60px;background:linear-gradient(180deg,#d2d2d1 0,#cccdca 25%,#cccdca 100%);"></div>
<div class="a" style="left:0.00px;top:699.20px;width:2839.00px;height:48.00px;background:#f9f9fa;"></div>
<div class="a" style="left:0.00px;top:747.00px;width:2839.00px;height:2.00px;background:#d4d4d8;"></div>
<div class="t" style="left:16.90px;top:711.70px;font-size:22.5px;line-height:28px;color:#0c0c0d;letter-spacing:0.252px;">/home/liuli/hpc/zxhpc-writeup/traffic-detector/1/src/main.cpp</div>
<div class="t m" style="left:2742.60px;top:711.88px;font-size:20px;line-height:25px;color:#0c0c0d;letter-spacing:-0.608px;">asm</div>
<svg class="a" style="left:2796px;top:711px" width="24" height="24" viewBox="0 0 24 24" fill="none" stroke="#38383d" stroke-width="2.6" stroke-linecap="round"><path d="M3.6 3.6 L20.2 20.4 M20.2 3.6 L3.6 20.4"/></svg>
<div class="a" style="left:0.00px;top:749.00px;width:2839.00px;height:36.40px;background:#ffffff;"></div>
<div class="a" style="left:0.00px;top:785.20px;width:2839.00px;height:1.80px;background:#d4d4d8;"></div>
<div class="t" style="left:46.10px;top:756.10px;font-size:22.5px;line-height:28px;color:#0c0c0d;letter-spacing:-0.958px;">Total</div>
<div class="t" style="left:156.30px;top:756.10px;font-size:22.5px;line-height:28px;color:#0c0c0d;letter-spacing:-0.660px;">Self</div>
<div class="a" style="left:100.20px;top:757.50px;width:1.40px;height:18.50px;background:#e0e0e4;"></div>
<div class="a" style="left:200.60px;top:757.50px;width:1.40px;height:18.50px;background:#e0e0e4;"></div>
<div class="a" style="left:0.00px;top:787.00px;width:2839.00px;height:946.00px;background:#ffffff;"></div>
<div class="a" style="left:2.00px;top:791.00px;width:2799.50px;height:32.00px;background:#ecf5fe;"></div>
<div class="t" style="left:78.23px;top:795.48px;font-size:22px;line-height:28px;color:#0c0c0d;letter-spacing:-0.370px;">2</div>
<div class="t" style="left:178.23px;top:795.48px;font-size:22px;line-height:28px;color:#0c0c0d;letter-spacing:-0.370px;">2</div>
<div class="t" style="left:263.59px;top:796.15px;font-size:21.5px;line-height:27px;color:#9c9ca2;letter-spacing:-1.250px;">32</div>
<div class="code" style="top:795.12px"><span class="op">}</span></div>
<div class="t" style="left:263.59px;top:828.15px;font-size:21.5px;line-height:27px;color:#9c9ca2;letter-spacing:-1.250px;">33</div>
<div class="t" style="left:263.59px;top:860.15px;font-size:21.5px;line-height:27px;color:#9c9ca2;letter-spacing:-1.250px;">34</div>
<div class="code" style="top:859.12px"><span class="ty">int</span> <span class="id">main</span><span class="op">(</span><span class="op">)</span> <span class="op">{</span></div>
<div class="t" style="left:263.59px;top:892.15px;font-size:21.5px;line-height:27px;color:#9c9ca2;letter-spacing:-1.250px;">35</div>
<div class="code" style="top:891.12px">    <span class="id">absl</span><span class="op">:</span><span class="op">:</span><span class="ty">flat_hash_map</span><span class="op">&lt;</span><span class="ty">FiveTuple</span><span class="op">,</span> <span class="id">std</span><span class="op">:</span><span class="op">:</span><span class="ty">vector</span><span class="op">&lt;</span><span class="id">std</span><span class="op">:</span><span class="op">:</span><span class="ty">string</span><span class="op">&gt;</span><span class="op">&gt;</span> <span class="id">flows</span><span class="op">;</span></div>
<div class="t" style="left:263.59px;top:924.15px;font-size:21.5px;line-height:27px;color:#9c9ca2;letter-spacing:-1.250px;">36</div>
<div class="code" style="top:923.12px">    <span class="id">absl</span><span class="op">:</span><span class="op">:</span><span class="ty">flat_hash_map</span><span class="op">&lt;</span><span class="id">std</span><span class="op">:</span><span class="op">:</span><span class="ty">string</span><span class="op">,</span> <span class="ty">int</span><span class="op">&gt;</span> <span class="id">dnstunnel</span><span class="op">;</span></div>
<div class="t" style="left:263.59px;top:956.15px;font-size:21.5px;line-height:27px;color:#9c9ca2;letter-spacing:-1.250px;">37</div>
<div class="t" style="left:263.59px;top:988.15px;font-size:21.5px;line-height:27px;color:#9c9ca2;letter-spacing:-1.250px;">38</div>
<div class="code" style="top:987.12px">    <span class="id">std</span><span class="op">:</span><span class="op">:</span><span class="ty">string</span> <span class="id">line</span><span class="op">;</span></div>
<div class="a" style="left:2.00px;top:1015.00px;width:2799.50px;height:32.00px;background:#ecf5fe;"></div>
<div class="t" style="left:30.77px;top:1019.48px;font-size:22px;line-height:28px;color:#0c0c0d;letter-spacing:-0.370px;">45369</div>
<div class="t" style="left:166.37px;top:1019.48px;font-size:22px;line-height:28px;color:#0c0c0d;letter-spacing:-0.370px;">69</div>
<div class="t" style="left:263.59px;top:1020.15px;font-size:21.5px;line-height:27px;color:#9c9ca2;letter-spacing:-1.250px;">39</div>
<div class="code" style="top:1019.12px">    <span class="kw">while</span> <span class="op">(</span><span class="id">std</span><span class="op">:</span><span class="op">:</span><span class="id">getline</span><span class="op">(</span><span class="id">std</span><span class="op">:</span><span class="op">:</span><span class="id">cin</span><span class="op">,</span> <span class="id">line</span><span class="op">)</span><span class="op">)</span> <span class="op">{</span></div>
<div class="a" style="left:2.00px;top:1047.00px;width:2799.50px;height:32.00px;background:#ecf5fe;"></div>
<div class="t" style="left:66.37px;top:1051.48px;font-size:22px;line-height:28px;color:#0c0c0d;letter-spacing:-0.370px;">69</div>
<div class="t" style="left:166.37px;top:1051.48px;font-size:22px;line-height:28px;color:#0c0c0d;letter-spacing:-0.370px;">16</div>
<div class="t" style="left:263.59px;top:1052.15px;font-size:21.5px;line-height:27px;color:#9c9ca2;letter-spacing:-1.250px;">40</div>
<div class="code" style="top:1051.12px">        <span class="kw">if</span> <span class="op">(</span><span class="id">line</span><span class="op">.</span><span class="fn">empty</span><span class="op">(</span><span class="op">)</span><span class="op">)</span> <span class="kw">continue</span><span class="op">;</span></div>
<div class="a" style="left:2.00px;top:1079.00px;width:2799.50px;height:32.00px;background:#ecf5fe;"></div>
<div class="t" style="left:66.37px;top:1083.48px;font-size:22px;line-height:28px;color:#0c0c0d;letter-spacing:-0.370px;">53</div>
<div class="t" style="left:178.23px;top:1083.48px;font-size:22px;line-height:28px;color:#0c0c0d;letter-spacing:-0.370px;">5</div>
<div class="t" style="left:263.59px;top:1084.15px;font-size:21.5px;line-height:27px;color:#9c9ca2;letter-spacing:-1.250px;">41</div>
<div class="code" style="top:1083.12px">        <span class="kw">const</span> <span class="ty">char</span><span class="star">*</span> <span class="id">p</span> <span class="op">=</span> <span class="id">line</span><span class="op">.</span><span class="fn">c_str</span><span class="op">(</span><span class="op">)</span><span class="op">;</span></div>
<div class="t" style="left:263.59px;top:1116.15px;font-size:21.5px;line-height:27px;color:#9c9ca2;letter-spacing:-1.250px;">42</div>
<div class="t" style="left:263.59px;top:1148.15px;font-size:21.5px;line-height:27px;color:#9c9ca2;letter-spacing:-1.250px;">43</div>
<div class="code" style="top:1147.12px">        <span class="cm">// timestamp</span></div>
<div class="a" style="left:2.00px;top:1175.00px;width:2799.50px;height:32.00px;background:#ecf5fe;"></div>
<div class="t" style="left:42.64px;top:1179.48px;font-size:22px;line-height:28px;color:#0c0c0d;letter-spacing:-0.370px;">1076</div>
<div class="t" style="left:142.64px;top:1179.48px;font-size:22px;line-height:28px;color:#0c0c0d;letter-spacing:-0.370px;">1076</div>
<div class="t" style="left:263.59px;top:1180.15px;font-size:21.5px;line-height:27px;color:#9c9ca2;letter-spacing:-1.250px;">44</div>
<div class="code" style="top:1179.12px">        <span class="kw">while</span> <span class="op">(</span><span class="star">*</span><span class="id">p</span> <span class="op">&amp;</span><span class="op">&amp;</span> <span class="star">*</span><span class="id">p</span> <span class="op">!</span><span class="op">=</span> <span class="st">' '</span><span class="op">)</span> <span class="op">+</span><span class="op">+</span><span class="id">p</span><span class="op">;</span> <span class="kw">while</span> <span class="op">(</span><span class="star">*</span><span class="id">p</span><span class="op">=</span><span class="op">=</span><span class="st">' '</span><span class="op">)</span> <span class="op">+</span><span class="op">+</span><span class="id">p</span><span class="op">;</span></div>
<div class="t" style="left:263.59px;top:1212.15px;font-size:21.5px;line-height:27px;color:#9c9ca2;letter-spacing:-1.250px;">45</div>
<div class="code" style="top:1211.12px">        <span class="cm">// protocol</span></div>
<div class="t" style="left:263.59px;top:1244.15px;font-size:21.5px;line-height:27px;color:#9c9ca2;letter-spacing:-1.250px;">46</div>
<div class="code" style="top:1243.12px">        <span class="kw">const</span> <span class="ty">char</span><span class="star">*</span> <span class="id">prot_start</span> <span class="op">=</span> <span class="id">p</span><span class="op">;</span></div>
<div class="a" style="left:2.00px;top:1271.00px;width:2799.50px;height:32.00px;background:#ecf5fe;"></div>
<div class="t" style="left:42.64px;top:1275.48px;font-size:22px;line-height:28px;color:#0c0c0d;letter-spacing:-0.370px;">1375</div>
<div class="t" style="left:154.50px;top:1275.48px;font-size:22px;line-height:28px;color:#0c0c0d;letter-spacing:-0.370px;">255</div>
<div class="t" style="left:263.59px;top:1276.15px;font-size:21.5px;line-height:27px;color:#9c9ca2;letter-spacing:-1.250px;">47</div>
<div class="code" style="top:1275.12px">        <span class="kw">while</span> <span class="op">(</span><span class="star">*</span><span class="id">p</span> <span class="op">&amp;</span><span class="op">&amp;</span> <span class="star">*</span><span class="id">p</span> <span class="op">!</span><span class="op">=</span> <span class="st">' '</span><span class="op">)</span> <span class="op">+</span><span class="op">+</span><span class="id">p</span><span class="op">;</span> <span class="id">std</span><span class="op">:</span><span class="op">:</span><span class="ty">string</span> <span class="id">protocol</span><span class="op">(</span><span class="id">prot_start</span><span class="op">,</span> <span class="id">p</span> <span class="op">-</span> <span class="id">prot_start</span><span class="op">)</span><span class="op">;</span></div>
<div class="a" style="left:2.00px;top:1303.00px;width:2799.50px;height:32.00px;background:#ecf5fe;"></div>
<div class="t" style="left:66.37px;top:1307.48px;font-size:22px;line-height:28px;color:#0c0c0d;letter-spacing:-0.370px;">71</div>
<div class="t" style="left:166.37px;top:1307.48px;font-size:22px;line-height:28px;color:#0c0c0d;letter-spacing:-0.370px;">71</div>
<div class="t" style="left:263.59px;top:1308.15px;font-size:21.5px;line-height:27px;color:#9c9ca2;letter-spacing:-1.250px;">48</div>
<div class="code" style="top:1307.12px">        <span class="kw">while</span> <span class="op">(</span><span class="star">*</span><span class="id">p</span><span class="op">=</span><span class="op">=</span><span class="st">' '</span><span class="op">)</span> <span class="op">+</span><span class="op">+</span><span class="id">p</span><span class="op">;</span></div>
<div class="t" style="left:263.59px;top:1340.15px;font-size:21.5px;line-height:27px;color:#9c9ca2;letter-spacing:-1.250px;">49</div>
<div class="code" style="top:1339.12px">        <span class="cm">// src_ip</span></div>
<div class="t" style="left:263.59px;top:1372.15px;font-size:21.5px;line-height:27px;color:#9c9ca2;letter-spacing:-1.250px;">50</div>
<div class="code" style="top:1371.12px">        <span class="kw">const</span> <span class="ty">char</span><span class="star">*</span> <span class="id">src_start</span> <span class="op">=</span> <span class="id">p</span><span class="op">;</span></div>
<div class="a" style="left:2.00px;top:1399.00px;width:2799.50px;height:32.00px;background:#ecf5fe;"></div>
<div class="t" style="left:42.64px;top:1403.48px;font-size:22px;line-height:28px;color:#0c0c0d;letter-spacing:-0.370px;">2534</div>
<div class="t" style="left:142.64px;top:1403.48px;font-size:22px;line-height:28px;color:#0c0c0d;letter-spacing:-0.370px;">1089</div>
<div class="t" style="left:263.59px;top:1404.15px;font-size:21.5px;line-height:27px;color:#9c9ca2;letter-spacing:-1.250px;">51</div>
<div class="code" style="top:1403.12px">        <span class="kw">while</span> <span class="op">(</span><span class="star">*</span><span class="id">p</span> <span class="op">&amp;</span><span class="op">&amp;</span> <span class="star">*</span><span class="id">p</span> <span class="op">!</span><span class="op">=</span> <span class="st">' '</span><span class="op">)</span> <span class="op">+</span><span class="op">+</span><span class="id">p</span><span class="op">;</span> <span class="id">std</span><span class="op">:</span><span class="op">:</span><span class="ty">string</span> <span class="id">src_ip</span><span class="op">(</span><span class="id">src_start</span><span class="op">,</span> <span class="id">p</span> <span class="op">-</span> <span class="id">src_start</span><span class="op">)</span><span class="op">;</span></div>
<div class="a" style="left:2.00px;top:1431.00px;width:2799.50px;height:32.00px;background:#ecf5fe;"></div>
<div class="t" style="left:66.37px;top:1435.48px;font-size:22px;line-height:28px;color:#0c0c0d;letter-spacing:-0.370px;">76</div>
<div class="t" style="left:166.37px;top:1435.48px;font-size:22px;line-height:28px;color:#0c0c0d;letter-spacing:-0.370px;">76</div>
<div class="t" style="left:263.59px;top:1436.15px;font-size:21.5px;line-height:27px;color:#9c9ca2;letter-spacing:-1.250px;">52</div>
<div class="code" style="top:1435.12px">        <span class="kw">while</span> <span class="op">(</span><span class="star">*</span><span class="id">p</span><span class="op">=</span><span class="op">=</span><span class="st">' '</span><span class="op">)</span> <span class="op">+</span><span class="op">+</span><span class="id">p</span><span class="op">;</span></div>
<div class="t" style="left:263.59px;top:1468.15px;font-size:21.5px;line-height:27px;color:#9c9ca2;letter-spacing:-1.250px;">53</div>
<div class="code" style="top:1467.12px">        <span class="cm">// dst_ip</span></div>
<div class="t" style="left:263.59px;top:1500.15px;font-size:21.5px;line-height:27px;color:#9c9ca2;letter-spacing:-1.250px;">54</div>
<div class="code" style="top:1499.12px">        <span class="kw">const</span> <span class="ty">char</span><span class="star">*</span> <span class="id">dst_start</span> <span class="op">=</span> <span class="id">p</span><span class="op">;</span></div>
<div class="a" style="left:2.00px;top:1527.00px;width:2799.50px;height:32.00px;background:#ecf5fe;"></div>
<div class="t" style="left:42.64px;top:1531.48px;font-size:22px;line-height:28px;color:#0c0c0d;letter-spacing:-0.370px;">2556</div>
<div class="t" style="left:154.50px;top:1531.48px;font-size:22px;line-height:28px;color:#0c0c0d;letter-spacing:-0.370px;">845</div>
<div class="t" style="left:263.59px;top:1532.15px;font-size:21.5px;line-height:27px;color:#9c9ca2;letter-spacing:-1.250px;">55</div>
<div class="code" style="top:1531.12px">        <span class="kw">while</span> <span class="op">(</span><span class="star">*</span><span class="id">p</span> <span class="op">&amp;</span><span class="op">&amp;</span> <span class="star">*</span><span class="id">p</span> <span class="op">!</span><span class="op">=</span> <span class="st">' '</span><span class="op">)</span> <span class="op">+</span><span class="op">+</span><span class="id">p</span><span class="op">;</span> <span class="id">std</span><span class="op">:</span><span class="op">:</span><span class="ty">string</span> <span class="id">dst_ip</span><span class="op">(</span><span class="id">dst_start</span><span class="op">,</span> <span class="id">p</span> <span class="op">-</span> <span class="id">dst_start</span><span class="op">)</span><span class="op">;</span></div>
<div class="a" style="left:2.00px;top:1559.00px;width:2799.50px;height:32.00px;background:#ecf5fe;"></div>
<div class="t" style="left:66.37px;top:1563.48px;font-size:22px;line-height:28px;color:#0c0c0d;letter-spacing:-0.370px;">86</div>
<div class="t" style="left:166.37px;top:1563.48px;font-size:22px;line-height:28px;color:#0c0c0d;letter-spacing:-0.370px;">86</div>
<div class="t" style="left:263.59px;top:1564.15px;font-size:21.5px;line-height:27px;color:#9c9ca2;letter-spacing:-1.250px;">56</div>
<div class="code" style="top:1563.12px">        <span class="kw">while</span> <span class="op">(</span><span class="star">*</span><span class="id">p</span><span class="op">=</span><span class="op">=</span><span class="st">' '</span><span class="op">)</span> <span class="op">+</span><span class="op">+</span><span class="id">p</span><span class="op">;</span></div>
<div class="t" style="left:263.59px;top:1596.15px;font-size:21.5px;line-height:27px;color:#9c9ca2;letter-spacing:-1.250px;">57</div>
<div class="a" style="left:2.00px;top:1623.00px;width:2799.50px;height:32.00px;background:#ecf5fe;"></div>
<div class="t" style="left:54.50px;top:1627.48px;font-size:22px;line-height:28px;color:#0c0c0d;letter-spacing:-0.370px;">834</div>
<div class="t" style="left:178.23px;top:1627.48px;font-size:22px;line-height:28px;color:#0c0c0d;letter-spacing:-0.370px;">6</div>
<div class="t" style="left:263.59px;top:1628.15px;font-size:21.5px;line-height:27px;color:#9c9ca2;letter-spacing:-1.250px;">58</div>
<div class="code" style="top:1627.12px">        <span class="kw">if</span> <span class="op">(</span><span class="id">protocol</span> <span class="op">=</span><span class="op">=</span> <span class="st">"TCP"</span><span class="op">)</span> <span class="op">{</span></div>
<div class="t" style="left:263.59px;top:1660.15px;font-size:21.5px;line-height:27px;color:#9c9ca2;letter-spacing:-1.250px;">59</div>
<div class="code" style="top:1659.12px">            <span class="cm">// src_port</span></div>
<div class="a" style="left:2.00px;top:1687.00px;width:2799.50px;height:32.00px;background:#ecf5fe;"></div>
<div class="t" style="left:78.23px;top:1691.48px;font-size:22px;line-height:28px;color:#0c0c0d;letter-spacing:-0.370px;">2</div>
<div class="t" style="left:178.23px;top:1691.48px;font-size:22px;line-height:28px;color:#0c0c0d;letter-spacing:-0.370px;">2</div>
<div class="t" style="left:263.59px;top:1692.15px;font-size:21.5px;line-height:27px;color:#9c9ca2;letter-spacing:-1.250px;">60</div>
<div class="code" style="top:1691.12px">            <span class="kw">const</span> <span class="ty">char</span><span class="star">*</span> <span class="id">s</span> <span class="op">=</span> <span class="id">p</span><span class="op">;</span></div>
<div class="a" style="left:2.00px;top:1719.00px;width:2799.50px;height:32.00px;background:#ecf5fe;"></div>
<div class="t" style="left:42.64px;top:1723.48px;font-size:22px;line-height:28px;color:#0c0c0d;letter-spacing:-0.370px;">3169</div>
<div class="t" style="left:154.50px;top:1723.48px;font-size:22px;line-height:28px;color:#0c0c0d;letter-spacing:-0.370px;">359</div>
<div class="t" style="left:263.59px;top:1724.15px;font-size:21.5px;line-height:27px;color:#9c9ca2;letter-spacing:-1.250px;">61</div>
<div class="code" style="top:1723.12px">            <span class="kw">while</span> <span class="op">(</span><span class="star">*</span><span class="id">p</span> <span class="op">&amp;</span><span class="op">&amp;</span> <span class="star">*</span><span class="id">p</span> <span class="op">!</span><span class="op">=</span> <span class="st">' '</span><span class="op">)</span> <span class="op">+</span><span class="op">+</span><span class="id">p</span><span class="op">;</span> <span class="ty">int</span> <span class="id">src_port</span> <span class="op">=</span> <span class="id">std</span><span class="op">:</span><span class="op">:</span><span class="id">stoi</span><span class="op">(</span><span class="id">std</span><span class="op">:</span><span class="op">:</span><span class="ty">string</span><span class="op">(</span><span class="id">s</span><span class="op">,</span> <span class="id">p</span> <span class="op">-</span> <span class="id">s</span><span class="op">)</span><span class="op">)</span><span class="op">;</span></div>
<div class="a" style="left:100.00px;top:787.00px;width:1.60px;height:946.00px;background:#d0d0d8;"></div>
<div class="a" style="left:200.40px;top:787.00px;width:1.60px;height:946.00px;background:#d0d0d8;"></div>
<div class="a" style="left:2801.50px;top:787.00px;width:30.50px;height:946.00px;background:#fdfdfd;"></div>
<div class="a" style="left:2808.00px;top:1106.00px;width:18.00px;height:262.00px;background:#8b8b8b;border-radius:9px;"></div>
<svg class="a" style="left:2806px;top:800px" width="22" height="20" viewBox="0 0 22 20"><path d="M11 4.5 L18.8 15.5 H3.2 Z" fill="#8b8b8b" stroke="#8b8b8b" stroke-width="2.6" stroke-linejoin="round"/></svg>
<svg class="a" style="left:2806px;top:1710px" width="22" height="20" viewBox="0 0 22 20"><path d="M11 15.5 L18.8 4.5 H3.2 Z" fill="#8b8b8b" stroke="#8b8b8b" stroke-width="2.6" stroke-linejoin="round"/></svg>
<div class="a" style="left:858.80px;top:566.00px;width:1234.20px;height:402.80px;background:#f9f9fa;box-shadow:0 1px 5px rgba(0,0,0,.30),0 3px 9px rgba(0,0,0,.16);border:1px solid #cfcfd2;box-sizing:border-box;"></div>
<div class="t" style="left:875.68px;top:587.43px;font-size:23px;line-height:29px;color:#5f5f64;font-weight:700;letter-spacing:0.997px;">24%</div>
<div class="t" style="left:935.90px;top:588.10px;font-size:22.5px;line-height:28px;color:#0c0c0d;letter-spacing:0.464px;">std::getline&lt;char, std::char_traits&lt;char&gt;, std::allocator&lt;char&gt; &gt;(std::basic_istream&lt;char, std::char_traits&lt;c...</div>
<div class="a" style="left:876.00px;top:633.40px;width:1200.00px;height:1.90px;background:#b1b1b5;"></div>
<div class="t" style="left:895.70px;top:657.80px;font-size:22.5px;line-height:28px;color:#727277;letter-spacing:-0.520px;">Category:</div>
<div class="a" style="left:998.90px;top:661.00px;width:18.40px;height:17.80px;background:#ffe12c;"></div>
<div class="t" style="left:1022.90px;top:657.80px;font-size:22.5px;line-height:28px;color:#0c0c0d;letter-spacing:-1.105px;">User</div>
<div class="t" style="left:951.00px;top:692.50px;font-size:22.5px;line-height:28px;color:#727277;letter-spacing:-1.104px;">File:</div>
<div class="t" style="left:998.10px;top:692.50px;font-size:22.5px;line-height:28px;color:#0c0c0d;letter-spacing:0.181px;">/usr/src/debug/gcc/gcc/libstdc++-v3/src/c++98/istream-string.cc</div>
<div class="t" style="left:896.30px;top:727.00px;font-size:22.5px;line-height:28px;color:#727277;letter-spacing:-1.218px;">Resource:</div>
<div class="t" style="left:998.30px;top:727.00px;font-size:22.5px;line-height:28px;color:#0c0c0d;letter-spacing:-0.305px;">libstdc++.so.6.0.34</div>
<div class="a" style="left:876.00px;top:765.00px;width:1200.00px;height:1.90px;background:#b1b1b5;"></div>
<div class="t" style="left:1275.50px;top:779.90px;font-size:22.5px;line-height:28px;color:#77777c;letter-spacing:-0.438px;">Running</div>
<div class="t" style="left:1461.30px;top:779.90px;font-size:22.5px;line-height:28px;color:#77777c;letter-spacing:-0.594px;">Self</div>
<div class="a" style="left:1442.40px;top:777.50px;width:1.50px;height:30.00px;background:#d2d2d6;"></div>
<div class="a" style="left:1616.40px;top:777.50px;width:1.50px;height:30.00px;background:#d2d2d6;"></div>
<div class="t" style="left:875.30px;top:842.90px;font-size:22.5px;line-height:28px;color:#5f5f64;font-weight:700;letter-spacing:-0.352px;">Overall</div>
<div class="a" style="left:957.00px;top:845.00px;width:300.00px;height:8.20px;background:#45a1ff;"></div>
<div class="a" style="left:1255.60px;top:845.00px;width:1.40px;height:8.20px;background:#4f7fb5;"></div>
<div class="a" style="left:957.00px;top:856.60px;width:300.00px;height:8.20px;background:#dcdcde;"></div>
<div class="a" style="left:957.00px;top:856.60px;width:22.00px;height:8.20px;background:#45a1ff;"></div>
<div class="a" style="left:977.80px;top:856.60px;width:1.30px;height:8.20px;background:#4f7fb5;"></div>
<div class="t" style="left:1275.50px;top:842.90px;font-size:22.5px;line-height:28px;color:#0c0c0d;font-weight:700;letter-spacing:-0.471px;">45,133 samples</div>
<div class="t" style="left:1461.50px;top:842.90px;font-size:22.5px;line-height:28px;color:#0c0c0d;font-weight:700;letter-spacing:-0.469px;">3,392 samples</div>
<div class="t" style="left:903.30px;top:905.30px;font-size:22.5px;line-height:28px;color:#5f5f64;font-weight:700;letter-spacing:-1.282px;">User</div>
<div class="a" style="left:957.00px;top:908.00px;width:300.00px;height:8.20px;background:#ffe12c;"></div>
<div class="a" style="left:1255.60px;top:908.00px;width:1.40px;height:8.20px;background:#8c7a1a;"></div>
<div class="a" style="left:957.00px;top:919.60px;width:300.00px;height:8.20px;background:#dcdcde;"></div>
<div class="a" style="left:957.00px;top:919.60px;width:22.00px;height:8.20px;background:#ffe12c;"></div>
<div class="a" style="left:977.80px;top:919.60px;width:1.30px;height:8.20px;background:#8c7a1a;"></div>
<div class="t" style="left:1275.50px;top:905.30px;font-size:22.5px;line-height:28px;color:#0c0c0d;font-weight:700;letter-spacing:-0.471px;">45,133 samples</div>
<div class="t" style="left:1461.50px;top:905.30px;font-size:22.5px;line-height:28px;color:#0c0c0d;font-weight:700;letter-spacing:-0.469px;">3,392 samples</div>
<div class="a" style="left:0.00px;top:0.00px;width:2.20px;height:1733.00px;background:#30343a;"></div>
<div class="a" style="left:2832.00px;top:0.00px;width:7.00px;height:1733.00px;background:#3a3a3c;"></div>
<svg class="a" style="left:0;top:0" width="8" height="8"><path d="M0 0 H6.4 A 4.4 4.4 0 0 0 2.2 4.4 V8 H0 Z" fill="#30343a"/></svg>
<svg class="a" style="left:0;top:1725px" width="6" height="8"><path d="M0 8 H3.6 Q2.4 5 2.2 0 H0 Z" fill="#30343a"/></svg>
<svg class="a" style="left:2827px;top:1723px" width="6" height="10"><path d="M6 10 H4.2 Q5 6 5.2 0 H6 Z" fill="#3a3a3c"/></svg>
<svg class="a" style="left:2826px;top:0" width="6" height="40"><path d="M6 0 H3.6 Q5.4 6 6 40 Z" fill="#3a3a3c"/></svg>
</body></html>
